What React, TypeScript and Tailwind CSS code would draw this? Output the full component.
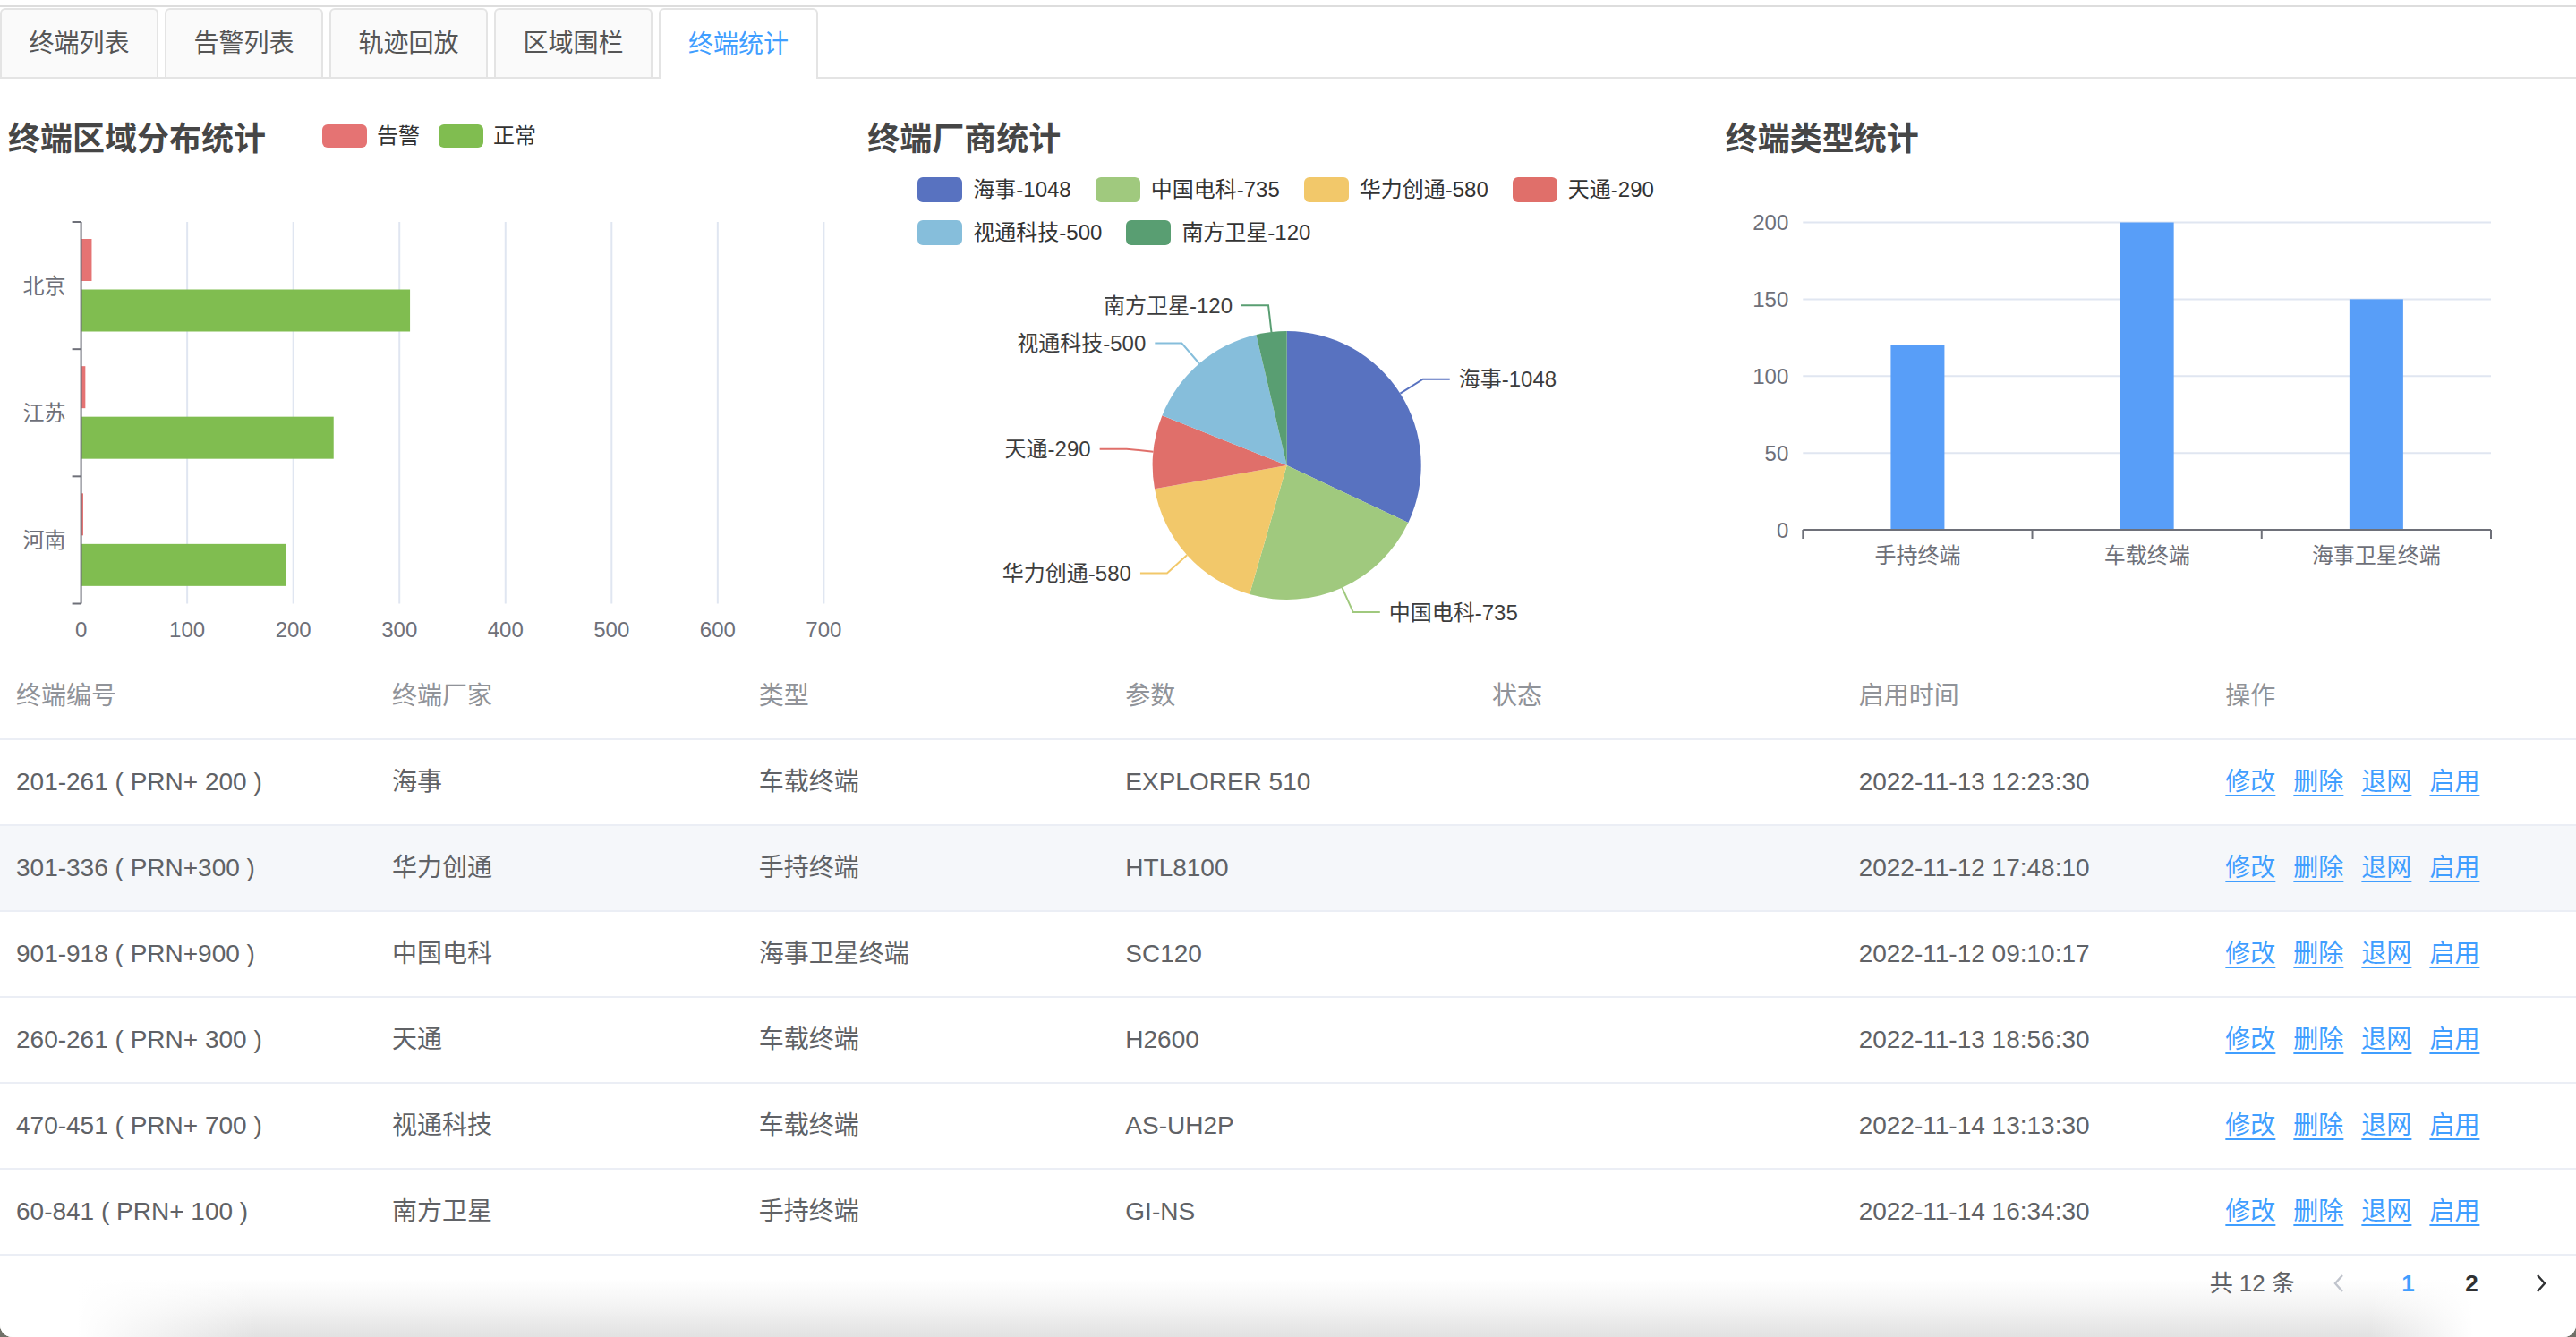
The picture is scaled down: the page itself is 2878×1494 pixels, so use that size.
import React from 'react';

const tabs = ['终端列表', '告警列表', '轨迹回放', '区域围栏', '终端统计'];

const regions = [
  { name: '北京', alarm: 10, normal: 310 },
  { name: '江苏', alarm: 4, normal: 238 },
  { name: '河南', alarm: 2, normal: 193 },
];

const vendors = [
  { name: '海事', value: 1048, color: '#5872c0' },
  { name: '中国电科', value: 735, color: '#a0c97e' },
  { name: '华力创通', value: 580, color: '#f2c86a' },
  { name: '天通', value: 290, color: '#e06f6a' },
  { name: '视通科技', value: 500, color: '#86bedb' },
  { name: '南方卫星', value: 120, color: '#599e72' },
];

const types = [
  { name: '手持终端', value: 120 },
  { name: '车载终端', value: 200 },
  { name: '海事卫星终端', value: 150 },
];

const rows = [
  ['201-261 ( PRN+ 200 )', '海事', '车载终端', 'EXPLORER 510', '', '2022-11-13 12:23:30'],
  ['301-336 ( PRN+300 )', '华力创通', '手持终端', 'HTL8100', '', '2022-11-12 17:48:10'],
  ['901-918 ( PRN+900 )', '中国电科', '海事卫星终端', 'SC120', '', '2022-11-12 09:10:17'],
  ['260-261 ( PRN+ 300 )', '天通', '车载终端', 'H2600', '', '2022-11-13 18:56:30'],
  ['470-451 ( PRN+ 700 )', '视通科技', '车载终端', 'AS-UH2P', '', '2022-11-14 13:13:30'],
  ['60-841 ( PRN+ 100 )', '南方卫星', '手持终端', 'GI-NS', '', '2022-11-14 16:34:30'],
];

const headers = ['终端编号', '终端厂家', '类型', '参数', '状态', '启用时间', '操作'];

function ChartTitle({ text }: { text: string }) {
  return <span className="text-[36px] leading-[36px] font-bold text-[#464646]">{text}</span>;
}

function RegionChart() {
  const x0 = 90.6;
  const unit = 1.1854;
  const top = 74;
  const band = 142.17;
  return (
    <div className="h-[643px]">
      <div className="flex items-center h-[36px] mt-[50px] pl-[9px]">
        <ChartTitle text="终端区域分布统计" />
        <div className="flex items-center ml-[63px] mb-[8px] text-[24px] leading-[28px] text-[#333]">
          <span className="w-[50px] h-[26px] rounded-[6px] bg-[#e57373]" />
          <span className="ml-[11px]">告警</span>
          <span className="w-[50px] h-[26px] rounded-[6px] bg-[#80bd50] ml-[21px]" />
          <span className="ml-[11px]">正常</span>
        </div>
      </div>
      <svg width={959} height={557} className="block">
        {[1, 2, 3, 4, 5, 6, 7].map((i) => (
          <line key={i} x1={x0 + 118.54 * i} x2={x0 + 118.54 * i} y1={top} y2={top + band * 3} stroke="#e0e6f1" strokeWidth={2} />
        ))}
        {regions.map((r, i) => {
          const bt = top + band * i;
          return (
            <g key={r.name}>
              <rect x={x0} y={bt + 19} width={r.alarm * unit} height={47} fill="#e57373" />
              <rect x={x0} y={bt + 75.5} width={r.normal * unit} height={47} fill="#80bd50" />
              <text x={73.5} y={bt + band / 2} textAnchor="end" dominantBaseline="central" fontSize={24} fill="#6e7079">
                {r.name}
              </text>
            </g>
          );
        })}
        <line x1={x0} x2={x0} y1={top} y2={top + band * 3} stroke="#6e7079" strokeWidth={2} />
        {[0, 1, 2, 3].map((i) => (
          <line key={i} x1={80.6} x2={x0} y1={top + band * i} y2={top + band * i} stroke="#6e7079" strokeWidth={2} />
        ))}
        {[0, 100, 200, 300, 400, 500, 600, 700].map((v, i) => (
          <text key={v} x={x0 + 118.54 * i} y={529} textAnchor="middle" dominantBaseline="central" fontSize={24} fill="#6e7079">
            {v}
          </text>
        ))}
      </svg>
    </div>
  );
}

function VendorChart() {
  const cx = 478.7;
  const cy = 246;
  const r = 150;
  const total = vendors.reduce((s, v) => s + v.value, 0);
  const pt = (a: number, rad: number) => [cx + rad * Math.sin((a * Math.PI) / 180), cy - rad * Math.cos((a * Math.PI) / 180)];
  let acc = 0;
  const slices = vendors.map((v) => {
    const a0 = acc;
    const a1 = acc + (v.value / total) * 360;
    acc = a1;
    const [sx, sy] = pt(a0, r);
    const [ex, ey] = pt(a1, r);
    const d = `M${cx},${cy} L${sx},${sy} A${r},${r} 0 ${a1 - a0 > 180 ? 1 : 0} 1 ${ex},${ey} Z`;
    const mid = (a0 + a1) / 2;
    const [p0x, p0y] = pt(mid, r);
    const [p1x, p1y] = pt(mid, r + 30);
    const right = Math.sin((mid * Math.PI) / 180) > 0;
    const p2x = p1x + (right ? 30 : -30);
    return { ...v, d, p0x, p0y, p1x, p1y, p2x, right };
  });
  const row1 = vendors.slice(0, 4);
  const row2 = vendors.slice(4);
  const item = (v: (typeof vendors)[number], first: boolean) => (
    <div key={v.name} className={`flex items-center ${first ? '' : 'ml-[27px]'}`}>
      <span className="w-[50px] h-[28px] rounded-[6px]" style={{ background: v.color }} />
      <span className="ml-[12px]">{`${v.name}-${v.value}`}</span>
    </div>
  );
  return (
    <div className="h-[643px]">
      <div className="flex items-center h-[36px] mt-[50px] pl-[10px]">
        <ChartTitle text="终端厂商统计" />
      </div>
      <div className="pl-[66px] text-[24px] leading-[28px] text-[#333]">
        <div className="flex h-[28px] mt-[24px]">{row1.map((v, i) => item(v, i === 0))}</div>
        <div className="flex h-[28px] mt-[20px]">{row2.map((v, i) => item(v, i === 0))}</div>
      </div>
      <svg width={959} height={457} className="block">
        {slices.map((s) => (
          <path key={s.name} d={s.d} fill={s.color} />
        ))}
        {slices.map((s) => (
          <g key={s.name + 'l'}>
            <polyline points={`${s.p0x},${s.p0y} ${s.p1x},${s.p1y} ${s.p2x},${s.p1y}`} fill="none" stroke={s.color} strokeWidth={2} />
            <text
              x={s.p2x + (s.right ? 10 : -10)}
              y={s.p1y}
              textAnchor={s.right ? 'start' : 'end'}
              dominantBaseline="central"
              fontSize={24}
              fill="#3d3d3d"
            >
              {`${s.name}-${s.value}`}
            </text>
          </g>
        ))}
      </svg>
    </div>
  );
}

function TypeChart() {
  const left = 95.3;
  const right = 864;
  const base = 418;
  const unit = 1.7175;
  const band = (right - left) / 3;
  return (
    <div className="h-[643px]">
      <div className="flex items-center h-[36px] mt-[50px] pl-[9px]">
        <ChartTitle text="终端类型统计" />
      </div>
      <svg width={959} height={557} className="block">
        {[50, 100, 150, 200].map((v) => (
          <line key={v} x1={left} x2={right} y1={base - v * unit} y2={base - v * unit} stroke="#e0e6f1" strokeWidth={2} />
        ))}
        {[0, 50, 100, 150, 200].map((v) => (
          <text key={v} x={79.3} y={base - v * unit} textAnchor="end" dominantBaseline="central" fontSize={24} fill="#6e7079">
            {v}
          </text>
        ))}
        {types.map((t, i) => {
          const c = left + band * i + band / 2;
          return (
            <g key={t.name}>
              <rect x={c - 30} y={base - t.value * unit} width={60} height={t.value * unit} fill="#589ef8" />
              <text x={c} y={446} textAnchor="middle" dominantBaseline="central" fontSize={24} fill="#6e7079">
                {t.name}
              </text>
            </g>
          );
        })}
        <line x1={left} x2={right} y1={base} y2={base} stroke="#6e7079" strokeWidth={2} />
        {[0, 1, 2, 3].map((i) => (
          <line key={i} x1={left + band * i} x2={left + band * i} y1={base} y2={base + 10} stroke="#6e7079" strokeWidth={2} />
        ))}
      </svg>
    </div>
  );
}

function Chevron({ dir, color }: { dir: 'left' | 'right'; color: string }) {
  return (
    <svg width={12} height={20} viewBox="0 0 12 20">
      <polyline
        points={dir === 'left' ? '10,1 2,10 10,19' : '2,1 10,10 2,19'}
        fill="none"
        stroke={color}
        strokeWidth={2.4}
        strokeLinejoin="miter"
      />
    </svg>
  );
}

export default function App() {
  return (
    <div className="w-[2878px] h-[1494px] overflow-hidden bg-[#707068]">
      <div className="h-[1494px] rounded-b-[14px] overflow-hidden bg-white text-[#606266] [font-family:'Liberation_Sans','Noto_Sans_CJK_SC',sans-serif]">
        <div className="h-[6px]" />
        <div className="h-[2px] bg-[#dddddd]" />

        {/* tabs */}
        <div className="flex items-end gap-[7px] h-[80px] border-b-2 border-[#e4e4e4]">
          {tabs.map((t, i) =>
            i === tabs.length - 1 ? (
              <div
                key={t}
                className="relative w-[178px] h-[79px] -mb-[2px] flex items-center justify-center border-2 border-b-0 border-[#e4e4e4] rounded-t-[6px] bg-white text-[28px] text-[#409eff]"
              >
                {t}
              </div>
            ) : (
              <div
                key={t}
                className="w-[177px] h-[77px] flex items-center justify-center border-2 border-b-0 border-[#e4e4e4] rounded-t-[6px] bg-[#fafafa] text-[28px] text-[#555555]"
              >
                {t}
              </div>
            ),
          )}
        </div>

        {/* charts */}
        <div className="grid grid-cols-3">
          <RegionChart />
          <VendorChart />
          <TypeChart />
        </div>

        {/* table */}
        <div className="text-[28px]">
          <div className="grid grid-cols-[420px_repeat(6,1fr)] items-center h-[96px] border-b-2 border-[#ebeef5] text-[#909399]">
            {headers.map((h) => (
              <div key={h} className="pl-[18px]">
                {h}
              </div>
            ))}
          </div>
          {rows.map((r, i) => (
            <div
              key={i}
              className={`grid grid-cols-[420px_repeat(6,1fr)] items-center h-[96px] border-b-2 border-[#ebeef5] ${
                i === 1 ? 'bg-[#f5f7fa]' : 'bg-white'
              }`}
            >
              {r.map((c, j) => (
                <div key={j} className="pl-[18px] whitespace-nowrap">
                  {c}
                </div>
              ))}
              <div className="pl-[18px] flex gap-[20px] text-[#409eff]">
                {['修改', '删除', '退网', '启用'].map((a) => (
                  <span key={a} className="underline underline-offset-[5px] decoration-2">
                    {a}
                  </span>
                ))}
              </div>
            </div>
          ))}
        </div>

        {/* pagination */}
        <div className="h-[91px] bg-[linear-gradient(to_right,#ffffff_3%,transparent_10%,transparent_92%,#ffffff_96%),linear-gradient(to_bottom,#ffffff_25%,#f3f3f3_60%,#e0e0e0)]">
          <div className="flex justify-end items-center h-[56px] mt-[3px] pr-[5px] text-[26px]">
            <span className="mr-[15px] text-[#606266]">共 12 条</span>
            <div className="w-[68px] flex justify-center">
              <Chevron dir="left" color="#c0c4cc" />
            </div>
            <div className="w-[71px] ml-[8px] text-center font-bold text-[#409eff]">1</div>
            <div className="w-[71px] text-center font-bold text-[#303133]">2</div>
            <div className="w-[68px] ml-[8px] flex justify-center">
              <Chevron dir="right" color="#303133" />
            </div>
          </div>
        </div>
      </div>
    </div>
  );
}
